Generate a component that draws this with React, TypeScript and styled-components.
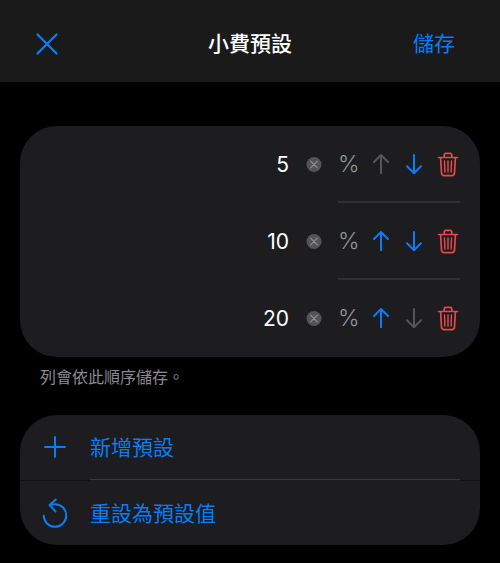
import { useState } from "react";
import styled, { createGlobalStyle } from "styled-components";

const blue = "#0a7cf8";
const red = "#e5484b";
const surface = "#1d1d1f";

const GlobalStyle = createGlobalStyle`
  * { box-sizing: border-box; }
  body {
    margin: 0;
    background: #000;
    color: #fff;
    font-family: Inter, "Noto Sans CJK TC", sans-serif;
    font-size: 21px;
    line-height: 32px;
  }
`;

const Header = styled.header`
  display: grid;
  grid-template-columns: 1fr auto 1fr;
  align-items: center;
  padding: 28px 36px 22px;
  background: #1a1a1a;
`;

const Title = styled.h1`
  margin: 0;
  font-size: 21px;
  font-weight: 500;
`;

const PlainButton = styled.button`
  display: flex;
  align-items: center;
  justify-content: center;
  padding: 0;
  border: 0;
  background: none;
  color: ${blue};
  font: inherit;
  cursor: pointer;
`;

const CloseButton = styled(PlainButton)`
  justify-self: start;
`;

const SaveButton = styled(PlainButton)`
  justify-self: end;
  padding-right: 9px;
`;

const Main = styled.main`
  display: flex;
  flex-direction: column;
  padding: 44px 20px 18px;
`;

const Card = styled.section`
  border-radius: 37px;
  background: ${surface};
  overflow: hidden;
`;

const PresetList = styled.ul`
  margin: 0;
  padding: 0 20px;
  list-style: none;
`;

const PresetRow = styled.li`
  display: flex;
  align-items: center;
  height: 77px;
`;

const AmountInput = styled.input`
  flex: 1;
  min-width: 0;
  padding: 0;
  border: 0;
  outline: 0;
  background: none;
  color: #fff;
  font: inherit;
  text-align: right;
`;

const ClearButton = styled(PlainButton)`
  width: 16px;
  margin: 0 16px 0 17px;
`;

const RowControls = styled.div<{ $last: boolean }>`
  display: flex;
  align-items: center;
  align-self: stretch;
  border-bottom: 2px solid ${(p) => (p.$last ? "transparent" : "#303032")};
`;

const Percent = styled.span`
  width: 26px;
  color: #929297;
  font-size: 23px;
  font-weight: 300;
`;

const MoveButton = styled(PlainButton)`
  width: 33px;

  &:disabled {
    color: #565658;
    cursor: default;
  }
`;

const DeleteButton = styled(PlainButton)`
  width: 24px;
  margin-left: 6px;
  color: ${red};
`;

const Note = styled.p`
  margin: 8px 20px 26px;
  color: #8b8b90;
  font-size: 16px;
  line-height: 24px;
`;

const ActionButton = styled(PlainButton)`
  display: grid;
  grid-template-columns: 70px 1fr;
  justify-items: center;
  width: 100%;
  height: 64px;
`;

const ActionLabel = styled.span`
  justify-self: start;
  padding-top: 2px;
`;

const Separator = styled.div`
  display: grid;
  grid-template-columns: 70px 1fr 20px;
  height: 2px;
`;

const SeparatorEdge = styled.span`
  align-self: end;
  height: 1px;
  background: #131314;
`;

const SeparatorLine = styled.span`
  height: 1px;
  background: #39393b;
`;

const Icon = styled.svg`
  display: block;
  flex: none;
  fill: none;
  stroke: currentColor;
  stroke-width: 2;
  stroke-linecap: round;
  stroke-linejoin: round;
`;

const CloseIcon = () => (
  <Icon width="22" height="22" viewBox="0 0 22 22">
    <path d="M1.5 1.5l19 19M20.5 1.5l-19 19" strokeWidth="2.3" />
  </Icon>
);

const ClearIcon = () => (
  <Icon width="16" height="16" viewBox="0 0 16 16">
    <circle cx="8" cy="7.5" r="7.5" fill="#545456" stroke="none" />
    <path d="M4.7 4.2l6.6 6.6M11.3 4.2l-6.6 6.6" stroke="#919194" strokeWidth="1.1" />
  </Icon>
);

const ArrowIcon = ({ down = false }: { down?: boolean }) => (
  <Icon width="18" height="22" viewBox="0 0 18 22">
    <path d={down ? "M9 2v18.2M2 13.2l7 7 7-7" : "M9 20.2V2M2 9l7-7 7 7"} />
  </Icon>
);

const TrashIcon = () => (
  <Icon width="22" height="26" viewBox="0 0 22 26">
    <path
      d="M1.5 6.5h19M7.2 6.3V4.2q0-1.8 1.8-1.8h4q1.8 0 1.8 1.8v2.1M3.6 6.8l.9 15.2q.2 2.6 2.7 2.6h7.6q2.5 0 2.7-2.6l.9-15.2"
      strokeWidth="1.7"
    />
    <path d="M7.5 10l.4 11M11 10v11M14.5 10l-.4 11" strokeWidth="1.5" />
  </Icon>
);

const PlusIcon = () => (
  <Icon width="24" height="24" viewBox="0 0 24 24">
    <path d="M12 2v20M2 12h20" />
  </Icon>
);

const ResetIcon = () => (
  <Icon width="26" height="32" viewBox="0 0 26 32">
    <path d="M1.7 18.5A11.3 11.3 0 1 0 13 7.2q-2.7 0-5.2.8M13.8 2.6L7.6 8l6 6.6" />
  </Icon>
);

const defaults = ["5", "10", "20"];

export default function App() {
  const [presets, setPresets] = useState(defaults);

  const change = (index: number, value: string) =>
    setPresets(presets.map((p, i) => (i === index ? value : p)));

  const move = (index: number, step: number) => {
    const next = [...presets];
    [next[index], next[index + step]] = [next[index + step], next[index]];
    setPresets(next);
  };

  return (
    <>
      <GlobalStyle />
      <Header>
        <CloseButton type="button" aria-label="關閉">
          <CloseIcon />
        </CloseButton>
        <Title>小費預設</Title>
        <SaveButton type="button">儲存</SaveButton>
      </Header>
      <Main>
        <Card>
          <PresetList>
            {presets.map((value, i) => {
              const last = i === presets.length - 1;
              return (
                <PresetRow key={i}>
                  <AmountInput
                    aria-label={`預設 ${i + 1}`}
                    inputMode="decimal"
                    value={value}
                    onChange={(e) => change(i, e.target.value)}
                  />
                  <ClearButton type="button" aria-label="清除" onClick={() => change(i, "")}>
                    <ClearIcon />
                  </ClearButton>
                  <RowControls $last={last}>
                    <Percent>%</Percent>
                    <MoveButton type="button" aria-label="上移" disabled={i === 0} onClick={() => move(i, -1)}>
                      <ArrowIcon />
                    </MoveButton>
                    <MoveButton type="button" aria-label="下移" disabled={last} onClick={() => move(i, 1)}>
                      <ArrowIcon down />
                    </MoveButton>
                    <DeleteButton
                      type="button"
                      aria-label="刪除"
                      onClick={() => setPresets(presets.filter((_, k) => k !== i))}
                    >
                      <TrashIcon />
                    </DeleteButton>
                  </RowControls>
                </PresetRow>
              );
            })}
          </PresetList>
        </Card>
        <Note>列會依此順序儲存。</Note>
        <Card>
          <ActionButton type="button" onClick={() => setPresets([...presets, ""])}>
            <PlusIcon />
            <ActionLabel>新增預設</ActionLabel>
          </ActionButton>
          <Separator>
            <SeparatorEdge />
            <SeparatorLine />
            <SeparatorEdge />
          </Separator>
          <ActionButton type="button" onClick={() => setPresets(defaults)}>
            <ResetIcon />
            <ActionLabel>重設為預設值</ActionLabel>
          </ActionButton>
        </Card>
      </Main>
    </>
  );
}
